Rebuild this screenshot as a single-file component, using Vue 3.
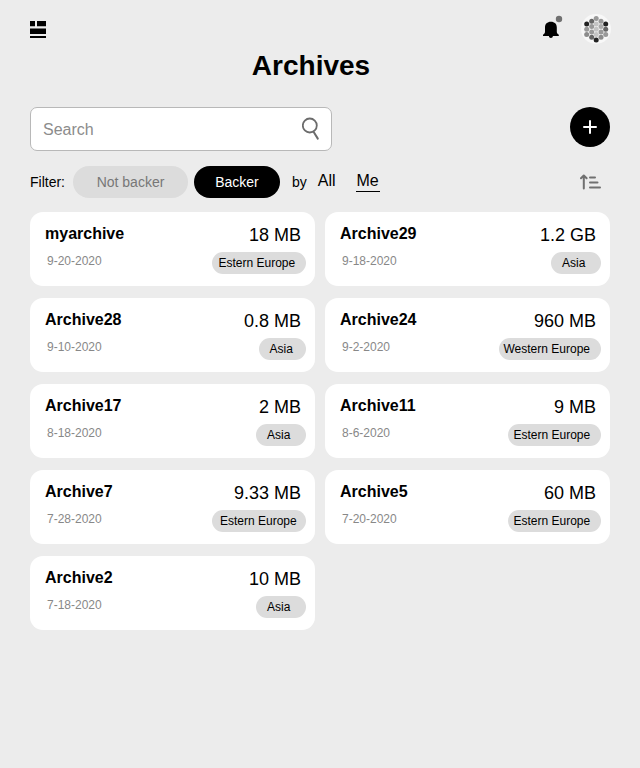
<script setup>
const archives = [
  { name: 'myarchive', date: '9-20-2020', size: '18 MB', region: 'Estern Europe', width: 94, pad: 6.5 },
  { name: 'Archive29', date: '9-18-2020', size: '1.2 GB', region: 'Asia', width: 50, pad: 11 },
  { name: 'Archive28', date: '9-10-2020', size: '0.8 MB', region: 'Asia', width: 47, pad: 10.5 },
  { name: 'Archive24', date: '9-2-2020', size: '960 MB', region: 'Western Europe', width: 102, pad: 4.5 },
  { name: 'Archive17', date: '8-18-2020', size: '2 MB', region: 'Asia', width: 50, pad: 11 },
  { name: 'Archive11', date: '8-6-2020', size: '9 MB', region: 'Estern Europe', width: 93.5, pad: 6 },
  { name: 'Archive7', date: '7-28-2020', size: '9.33 MB', region: 'Estern Europe', width: 94.5, pad: 8.5 },
  { name: 'Archive5', date: '7-20-2020', size: '60 MB', region: 'Estern Europe', width: 93.5, pad: 6 },
  { name: 'Archive2', date: '7-18-2020', size: '10 MB', region: 'Asia', width: 50, pad: 11 }
]

const dots = [
  [5.7, 10, '#222'], [5.7, 15.3, '#999'], [5.7, 20.6, '#8c8c8c'],
  [10.7, 7.3, '#666'], [10.7, 12.6, '#999'], [10.7, 18, '#999'], [10.7, 23.3, '#666'],
  [15.2, 4.4, '#999'], [15.2, 10, '#c4c4c4'], [15.2, 15.3, '#c4c4c4'], [15.2, 20.6, '#c4c4c4'], [15.2, 26, '#222'],
  [20, 7.3, '#999'], [20, 12.6, '#aaa'], [20, 18, '#999'], [20, 23.3, '#8c8c8c'],
  [24.7, 10, '#222'], [24.7, 15.3, '#666'], [24.7, 20.6, '#999']
]
</script>

<template>
  <main class="page">
    <header class="topbar">
      <svg class="menu" width="16" height="17" viewBox="0 0 16 17">
        <path d="M0 0H5V5.3H0zM7 0H16V5.3H7zM0 7.6H16V13H0zM0 15H16V17H0z" />
      </svg>
      <div class="account">
        <svg class="bell" width="22" height="26" viewBox="0 0 22 26">
          <path d="M9.900 6.800C6.200 6.800 4 9 4 12.500V16.500C4 18 3.600 18.600 2 19.800V21H17.800V19.800C16.200 18.600 15.800 18 15.800 16.500V12.500C15.800 9 13.600 6.800 9.900 6.800zM7.900 21c0 1.200.9 2 2 2s2-.8 2-2z" />
          <circle cx="18" cy="4" r="3.200" fill="#707070" />
        </svg>
        <svg class="avatar" width="30" height="30" viewBox="0 0 30 30">
          <circle cx="15" cy="15" r="15" fill="#f8f8f8" />
          <circle v-for="(d, i) in dots" :key="i" :cx="d[0]" :cy="d[1]" r="2.5" :fill="d[2]" />
        </svg>
      </div>
    </header>

    <h1>Archives</h1>

    <div class="tools">
      <label class="search">
        <input type="text" placeholder="Search" />
        <svg width="20" height="24" viewBox="0 0 20 24" fill="none" stroke="#6c6c6c" stroke-linecap="round">
          <circle cx="7.800" cy="8.500" r="7" stroke-width="1.800" />
          <path d="M11.700 15 15.800 21.600" stroke-width="2" />
        </svg>
      </label>
      <button class="add" aria-label="Add archive">
        <svg width="16" height="16" viewBox="0 0 16 16" fill="none" stroke="#fff" stroke-width="2" stroke-linecap="round">
          <path d="M8 2V14M2 8H14" />
        </svg>
      </button>
    </div>

    <div class="filters">
      <span class="label">Filter:</span>
      <button class="pill muted">Not backer</button>
      <button class="pill active">Backer</button>
      <span class="by">by</span>
      <a class="owner">All</a>
      <a class="owner selected">Me</a>
      <svg class="sort" width="22" height="16" viewBox="0 0 22 16" fill="none" stroke="#707070" stroke-width="2" stroke-linecap="round" stroke-linejoin="round">
        <path d="M3.800 14.400V1.800M1 4.300 3.800 1.500 6.600 4.300M10 3.500H15M10 8.600H17.500M10 13.600H20" />
      </svg>
    </div>

    <section class="grid">
      <article v-for="a in archives" :key="a.name" class="card">
        <div class="info">
          <h2>{{ a.name }}</h2>
          <time>{{ a.date }}</time>
        </div>
        <div class="details">
          <span class="size">{{ a.size }}</span>
          <span class="tag" :style="{ width: a.width + 'px', paddingLeft: a.pad + 'px' }">{{ a.region }}</span>
        </div>
      </article>
    </section>
  </main>
</template>

<style>
body {
  background: #ececec;
}
</style>

<style scoped>
.page,
.page * {
  box-sizing: border-box;
}
.page {
  width: 640px;
  height: 768px;
  padding: 14px 30px 0;
  background: #ececec;
  color: #000;
  font-family: "Liberation Sans", Arial, sans-serif;
}
button,
input {
  font: inherit;
  border: 0;
  padding: 0;
}
svg {
  display: block;
  flex: none;
}
.topbar {
  display: flex;
  justify-content: space-between;
  height: 31px;
}
.menu {
  margin-top: 7px;
}
.account {
  display: flex;
  gap: 18px;
  margin-right: -1px;
}
.bell {
  margin-top: 1px;
}
h1 {
  margin: 4px 0 0;
  padding-right: 18px;
  height: 34px;
  line-height: 34px;
  font-size: 28px;
  text-align: center;
}
.tools {
  display: flex;
  justify-content: space-between;
  margin-top: 24px;
}
.search {
  display: flex;
  justify-content: space-between;
  width: 302px;
  height: 44px;
  padding: 0 9px 0 12px;
  border: 1px solid #b8b8b8;
  border-radius: 7px;
  background: #fff;
}
.search input {
  width: 200px;
  padding-top: 2px;
  font-size: 16px;
  outline: none;
  background: none;
}
.search input::placeholder {
  color: #8c8c8c;
  opacity: 1;
}
.search svg {
  margin-top: 9px;
}
.add {
  display: grid;
  place-items: center;
  width: 40px;
  height: 40px;
  border-radius: 50%;
  background: #000;
}
.filters {
  display: flex;
  align-items: center;
  height: 32px;
  margin-top: 15px;
  font-size: 14px;
}
.label {
  width: 43px;
}
.pill {
  height: 32px;
  border-radius: 16px;
}
.muted {
  width: 115px;
  background: #dcdcdc;
  color: #777;
}
.active {
  width: 86px;
  margin-left: 6px;
  background: #000;
  color: #fff;
}
.by {
  margin-left: 12px;
}
.owner {
  height: 22px;
  margin-left: 11px;
  margin-top: -2px;
  line-height: 22px;
  font-size: 16px;
}
.selected {
  width: 24px;
  margin-left: 20px;
  text-align: center;
  box-shadow: inset 0 -1px 0 #000;
}
.sort {
  margin-left: auto;
  margin-right: 8px;
}
.grid {
  display: grid;
  grid-template-columns: 285px 285px;
  gap: 12px 10px;
  margin-top: 14px;
}
.card {
  display: flex;
  justify-content: space-between;
  height: 74px;
  padding-left: 15px;
  border-radius: 13px;
  background: #fff;
}
h2 {
  margin: 12px 0 0;
  font-size: 16px;
  line-height: 20px;
}
time {
  display: block;
  margin: 9px 0 0 2px;
  font-size: 12px;
  line-height: 16px;
  color: #888;
}
.details {
  display: flex;
  flex-direction: column;
  align-items: flex-end;
  padding-right: 9px;
}
.size {
  margin: 13px 5px 0 0;
  font-size: 18px;
  line-height: 20px;
}
.tag {
  height: 22px;
  margin-top: 7px;
  border-radius: 11px;
  background: #dcdcdc;
  font-size: 12px;
  line-height: 22px;
  white-space: nowrap;
}
</style>
